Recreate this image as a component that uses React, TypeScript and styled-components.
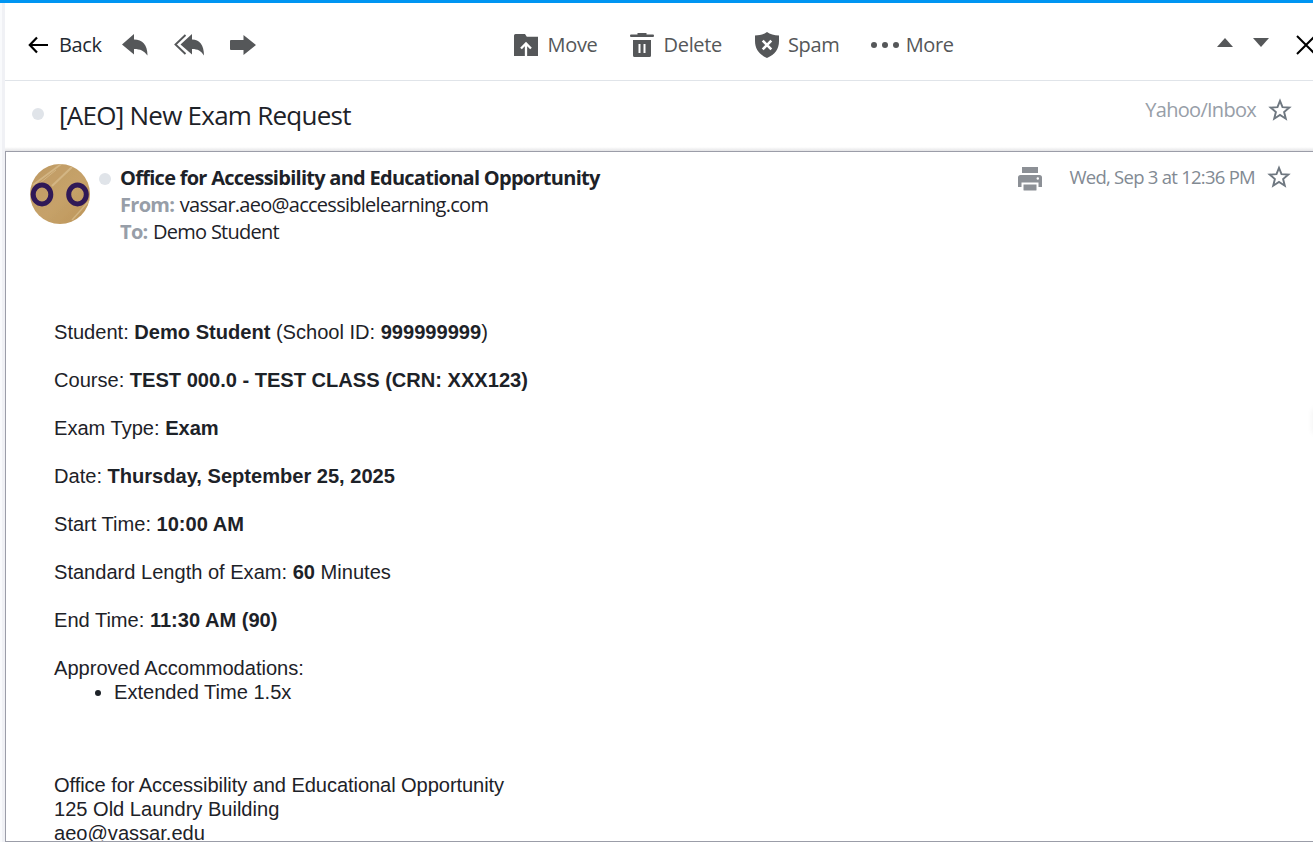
import React from "react";
import styled, { createGlobalStyle } from "styled-components";

const GlobalStyle = createGlobalStyle`
  * { box-sizing: border-box; }
  html, body { margin: 0; padding: 0; height: 100%; overflow: hidden; background: #fff; }
  svg { display: block; flex: none; }
`;

const Page = styled.div`
  width: 1313px;
  height: 842px;
  overflow: hidden;
  display: flex;
  flex-direction: column;
  border-top: 3px solid #0095f2;
  background: #fff;
  font-family: "Open Sans", sans-serif;
  color: #1d2228;
`;

const Columns = styled.div`
  flex: 1;
  min-height: 0;
  display: flex;
`;

const Gutter = styled.div`
  width: 5px;
  flex: none;
  background: #f0f1f5;
  border-left: 2px solid #f9fafc;
`;

const Main = styled.main`
  flex: 1;
  min-width: 0;
  display: flex;
  flex-direction: column;
  position: relative;
`;

const Toolbar = styled.header`
  height: 78px;
  flex: none;
  display: flex;
  align-items: center;
  padding: 7px 0 0 22px;
  border-bottom: 1px solid #e0e4e9;
`;

const Group = styled.div<{ $ml?: number }>`
  display: flex;
  align-items: center;
  margin-left: ${(p) => p.$ml ?? 0}px;
`;

const Action = styled.button<{ $gap: number; $ml?: number; $dark?: boolean; $w: number; $lift?: number }>`
  display: flex;
  align-items: center;
  gap: ${(p) => p.$gap}px;
  width: ${(p) => p.$w}px;
  margin: 0 0 0 ${(p) => p.$ml ?? 0}px;
  padding: 0 0 ${(p) => p.$lift ?? 0}px;
  border: 0;
  background: none;
  font: 400 20px/28px "Open Sans", sans-serif;
  white-space: nowrap;
  color: ${(p) => (p.$dark ? "#232a31" : "#555759")};
`;

const Label = styled.span`
  letter-spacing: -0.35px;
`;

const SubjectRow = styled.section`
  height: 70px;
  flex: none;
  display: flex;
  align-items: flex-start;
  padding-left: 27px;
  background: linear-gradient(#fff 66px, #e4e4e6 70px);
`;

const Dot = styled.i<{ $mt: number }>`
  width: 12px;
  height: 12px;
  flex: none;
  margin-top: ${(p) => p.$mt}px;
  border-radius: 50%;
  background: #e0e4e9;
`;

const Subject = styled.h1`
  margin: 16px 0 0 15px;
  font-size: 26px;
  font-weight: 400;
  line-height: 36px;
  letter-spacing: -0.74px;
  white-space: nowrap;
`;

const RightSide = styled.div<{ $mt: number; $pr: number }>`
  margin: ${(p) => p.$mt}px ${(p) => p.$pr}px 0 auto;
  display: flex;
  align-items: center;
  white-space: nowrap;
`;

const Muted = styled.span<{ $size: number; $ls: number; $color: string }>`
  font-size: ${(p) => p.$size}px;
  line-height: 26px;
  letter-spacing: ${(p) => p.$ls}px;
  color: ${(p) => p.$color};
`;

const Message = styled.article`
  flex: 1;
  min-height: 0;
  overflow: hidden;
  border: 1px solid #9b9da8;
  border-right: 0;
  background: #fff;
`;

const MessageHead = styled.div`
  display: flex;
  align-items: flex-start;
  height: 168px;
  padding: 12px 0 0 24px;
`;

const Sender = styled.div`
  margin: 0 0 0 9px;
  white-space: nowrap;
`;

const SenderLine = styled.div`
  font-size: 20px;
  line-height: 27px;
  letter-spacing: -0.73px;
`;

const SenderName = styled.strong`
  font-weight: 700;
`;

const Field = styled.b`
  margin-right: 1px;
  font-weight: 700;
  letter-spacing: -0.7px;
  color: #979ea8;
`;

const Body = styled.div`
  padding-left: 48px;
  font: 20.1px/24px "Liberation Sans", Arial, sans-serif;
  letter-spacing: -0.015px;
  white-space: nowrap;
`;

const Line = styled.p`
  margin: 0 0 24px;
`;

const List = styled.ul`
  margin: -24px 0 69px;
  padding-left: 60px;
`;

const Address = styled.address`
  font-style: normal;
`;

const OfficeName = styled.span`
  letter-spacing: -0.08px;
`;

const PrintButton = styled.div`
  padding-top: 2px;
  margin-bottom: -2px;
`;

const EdgeShade = styled.div`
  position: absolute;
  right: -6px;
  top: 406px;
  width: 6px;
  height: 24px;
  box-shadow: 0 0 6px rgba(0, 0, 0, 0.07);
`;

const Star = () => (
  <svg width="24" height="24" viewBox="0 0 24 24" fill="none" stroke="#6e7780" strokeWidth="1.9">
    <path d="M12 2.800l2.500 6.400 6.800.4-5.200 4.400 1.700 6.700-5.800-3.700-5.800 3.700 1.700-6.700-5.200-4.400 6.800-.4z" />
  </svg>
);

const BackArrow = () => (
  <svg width="20" height="18" viewBox="0 0 20 18" fill="none" stroke="#000" strokeWidth="2.200">
    <path d="M9 1.500L1.800 9 9 16.500M1.800 9H20" />
  </svg>
);

const Reply = () => (
  <svg width="26" height="22" viewBox="0 0 26 22" fill="#555759">
    <path d="M0 10.500L12 0v5.500c8.500 0 13.500 5.500 13.500 16-3.500-4.500-7-6.500-13.500-6.500v5.500z" />
  </svg>
);

const ReplyAll = () => (
  <svg width="30" height="22" viewBox="0 0 30 22">
    <path d="M11.500 1L1.500 10.500l10 9.500" fill="none" stroke="#555759" strokeWidth="1.900" />
    <path d="M6.500 10.500L18 0v5.500c7.500 0 12 5.500 12 16-3-4.500-6-6.500-12-6.500v5.500z" fill="#555759" />
  </svg>
);

const Forward = () => (
  <svg width="26" height="20" viewBox="0 0 26 20" fill="#555759">
    <path d="M1 5h12.500V0L26 10 13.500 20v-5H1q-1 0-1-1V6q0-1 1-1z" />
  </svg>
);

const MoveIcon = () => (
  <svg width="24" height="22" viewBox="0 0 24 22">
    <path d="M1.500 0H11l1.800 2.800H24V22H0V1.500Q0 0 1.500 0z" fill="#555759" />
    <path d="M12 22V10M7 14.500L12 9.500l5 5" fill="none" stroke="#fff" strokeWidth="2.300" />
  </svg>
);

const Trash = () => (
  <svg width="24" height="24" viewBox="0 0 24 24">
    <path d="M7.500 0h9v1.600H23q1 0 1 1.200t-1 1.200H1q-1 0-1-1.200t1-1.200h6.500zM3 7h18v15.500q0 1.500-1.500 1.500h-15Q3 24 3 22.500z" fill="#555759" />
    <path d="M9.500 11v9M14.500 11v9" stroke="#fff" strokeWidth="2" />
  </svg>
);

const Shield = () => (
  <svg width="24" height="26" viewBox="0 0 24 26">
    <path d="M12 0c3 2.300 7 3.500 12 3.500V9c0 8-4 13.500-12 17C4 22.500 0 17 0 9V3.500C5 3.500 9 2.300 12 0z" fill="#555759" />
    <path d="M7.700 8.700l8.600 8.600M16.300 8.700l-8.600 8.600" stroke="#fff" strokeWidth="2.600" />
  </svg>
);

const Ellipsis = () => (
  <svg width="28" height="6" viewBox="0 0 28 6" fill="#555759">
    <circle cx="3" cy="3" r="3" />
    <circle cx="14" cy="3" r="3" />
    <circle cx="25" cy="3" r="3" />
  </svg>
);

const Triangle = ({ down }: { down?: boolean }) => (
  <svg width="16" height="9" viewBox="0 0 16 9" fill="#555759">
    <path d={down ? "M0 0h16L8 9z" : "M0 9h16L8 0z"} />
  </svg>
);

const Close = () => (
  <svg width="20" height="20" viewBox="0 0 20 20" stroke="#000" strokeWidth="2">
    <path d="M1 1l18 18M19 1L1 19" />
  </svg>
);

const Printer = () => (
  <svg width="24" height="24" viewBox="0 0 24 24" fill="#8c9096">
    <path d="M4 0h16v6H4z" />
    <path d="M2.500 8h19Q24 8 24 10.500V20h-3.500v-4.500h-17V20H0v-9.500Q0 8 2.500 8z" />
    <path d="M5.500 17.500h13V23q0 .5-1 .5h-11q-1 0-1-.5z" />
    <circle cx="19.800" cy="11.500" r="1.200" fill="#fff" />
  </svg>
);

const Avatar = () => (
  <svg width="60" height="60" viewBox="0 0 60 60">
    <defs>
      <clipPath id="avatarClip"><circle cx="30" cy="30" r="30" /></clipPath>
      <linearGradient id="wood" x1="0" y1="0" x2="1" y2="1">
        <stop offset="0" stopColor="#bf9a64" />
        <stop offset=".55" stopColor="#c6a26a" />
        <stop offset="1" stopColor="#bd9559" />
      </linearGradient>
    </defs>
    <g clipPath="url(#avatarClip)">
      <rect width="60" height="60" fill="url(#wood)" />
      <g fill="none" stroke="#dcc294" opacity=".65">
        <path d="M3 21L34 -2" strokeWidth="1.800" />
        <path d="M22 22L42 3" strokeWidth="2" />
        <path d="M10 19L26 6" strokeWidth="1" />
        <path d="M42 56L60 36" strokeWidth="1.500" />
      </g>
      <g fill="none" stroke="#301957" strokeWidth="5">
        <ellipse cx="12" cy="30.500" rx="8.800" ry="9.400" />
        <ellipse cx="47.500" cy="30.500" rx="8.800" ry="9.400" />
      </g>
    </g>
  </svg>
);

const details = [
  <>Student: <b>Demo Student</b> (School ID: <b>999999999</b>)</>,
  <>Course: <b>TEST 000.0 - TEST CLASS (CRN: XXX123)</b></>,
  <>Exam Type: <b>Exam</b></>,
  <>Date: <b>Thursday, September 25, 2025</b></>,
  <>Start Time: <b>10:00 AM</b></>,
  <>Standard Length of Exam: <b>60</b> Minutes</>,
  <>End Time: <b>11:30 AM (90)</b></>,
  <>Approved Accommodations:</>,
];

export default function App() {
  return (
    <>
      <GlobalStyle />
      <Page>
        <Columns>
          <Gutter />
          <Main>
            <Toolbar>
              <Group $ml={1}>
                <Action $gap={11} $w={94} $dark><BackArrow /><Label>Back</Label></Action>
                <Action $gap={0} $w={26} aria-label="Reply"><Reply /></Action>
                <Action $gap={0} $w={30} $ml={26} aria-label="Reply all"><ReplyAll /></Action>
                <Action $gap={0} $w={26} $ml={26} aria-label="Forward"><Forward /></Action>
              </Group>
              <Group $ml={258}>
                <Action $gap={9.6} $w={116}><MoveIcon /><Label>Move</Label></Action>
                <Action $gap={9.6} $w={125}><Trash /><Label>Delete</Label></Action>
                <Action $gap={9} $w={116}><Shield /><Label>Spam</Label></Action>
                <Action $gap={6.7} $w={90}><Ellipsis /><Label>More</Label></Action>
              </Group>
              <Group $ml={256}>
                <Action $gap={20} $w={79} $lift={6}><Triangle /><Triangle down /></Action>
                <Action $gap={0} $w={20} aria-label="Close"><Close /></Action>
              </Group>
            </Toolbar>
            <SubjectRow>
              <Dot $mt={27} />
              <Subject>[AEO] New Exam Request</Subject>
              <RightSide $mt={16} $pr={21}>
                <Muted $size={20} $ls={-0.72} $color="#979ea8">Yahoo/Inbox</Muted>
                <Group $ml={12}><Star /></Group>
              </RightSide>
            </SubjectRow>
            <Message>
              <MessageHead>
                <Avatar />
                <Group $ml={9}><Dot $mt={9} /></Group>
                <Sender>
                  <SenderLine><SenderName>Office for Accessibility and Educational Opportunity</SenderName></SenderLine>
                  <SenderLine><Field>From:</Field> vassar.aeo@accessiblelearning.com</SenderLine>
                  <SenderLine><Field>To:</Field> Demo Student</SenderLine>
                </Sender>
                <RightSide $mt={0} $pr={22}>
                  <PrintButton><Printer /></PrintButton>
                  <Group $ml={27}><Muted $size={18.500} $ls={-0.74} $color="#828a93">Wed, Sep 3 at 12:36 PM</Muted></Group>
                  <Group $ml={12}><Star /></Group>
                </RightSide>
              </MessageHead>
              <Body>
                {details.map((line, i) => <Line key={i}>{line}</Line>)}
                <List><li>Extended Time 1.5x</li></List>
                <Address>
                  <OfficeName>Office for Accessibility and Educational Opportunity</OfficeName><br />
                  125 Old Laundry Building<br />
                  aeo@vassar.edu
                </Address>
              </Body>
            </Message>
            <EdgeShade />
          </Main>
        </Columns>
      </Page>
    </>
  );
}
